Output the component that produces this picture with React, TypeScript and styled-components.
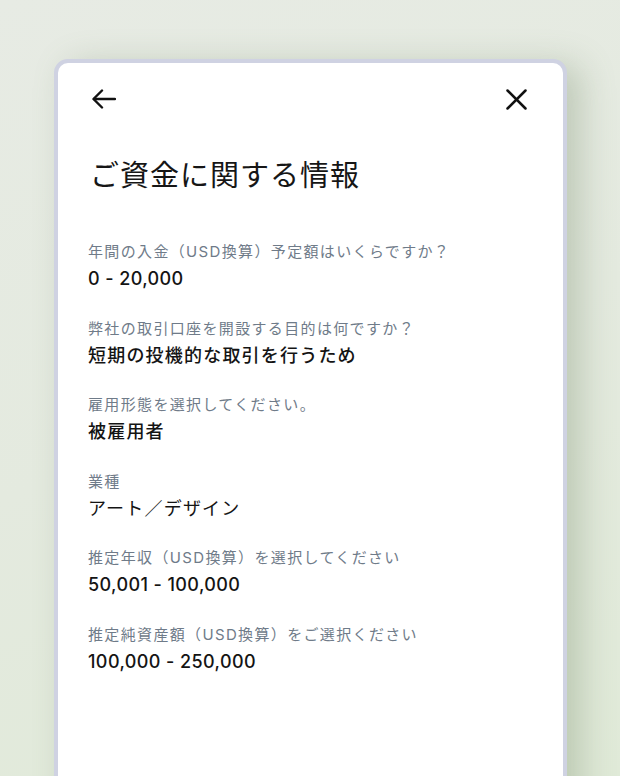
import React from 'react';
import styled, { createGlobalStyle } from 'styled-components';

const GlobalStyle = createGlobalStyle`
  html, body {
    margin: 0;
    padding: 0;
    height: 100%;
  }
  body {
    font-family: "Inter", "Noto Sans CJK JP", sans-serif;
    -webkit-font-smoothing: antialiased;
  }
`;

interface InfoItem {
  label: string;
  value: string;
  light?: boolean;
  numeric?: boolean;
}

const items: InfoItem[] = [
  { label: '年間の入金（USD換算）予定額はいくらですか？', value: '0 - 20,000', numeric: true },
  { label: '弊社の取引口座を開設する目的は何ですか？', value: '短期の投機的な取引を行うため' },
  { label: '雇用形態を選択してください。', value: '被雇用者' },
  { label: '業種', value: 'アート／デザイン', light: true },
  { label: '推定年収（USD換算）を選択してください', value: '50,001 - 100,000', numeric: true },
  { label: '推定純資産額（USD換算）をご選択ください', value: '100,000 - 250,000', numeric: true },
];

const Page = styled.div`
  height: 776px;
  overflow: hidden;
  background: linear-gradient(160deg, #e7ebe4 0%, #e4eadf 50%, #e0ead8 100%);
  padding: 59px 0 0 54px;
  box-sizing: border-box;
`;

const Card = styled.div`
  width: 513px;
  min-height: 760px;
  box-sizing: border-box;
  background: #ffffff;
  border: 4px solid #cfd2e2;
  border-radius: 14px;
  padding: 24px 36px 0 30px;
  box-shadow: 14px 6px 34px rgba(110, 130, 95, 0.32);
`;

const Header = styled.header`
  display: flex;
  justify-content: space-between;
  align-items: center;
  height: 24px;
  padding-left: 4px;

  button {
    background: transparent;
    border: none;
    padding: 0;
    display: flex;
    cursor: pointer;
  }
`;

const Title = styled.h1`
  margin: 45px 0 45px 2px;
  font-size: 29px;
  line-height: 40px;
  font-weight: 400;
  letter-spacing: 1px;
  color: #161616;
`;

const List = styled.dl`
  display: flex;
  flex-direction: column;
  gap: 25.5px;
  margin: 0;
`;

const Item = styled.div`
  display: flex;
  flex-direction: column;
  gap: 3px;
`;

const Label = styled.dt`
  font-size: 15px;
  line-height: 22px;
  letter-spacing: 1.35px;
  color: #6f7b89;
`;

const Value = styled.dd<{ $light?: boolean; $numeric?: boolean }>`
  margin: 0;
  font-size: 18px;
  line-height: 26px;
  letter-spacing: ${({ $numeric }) => ($numeric ? '0.4px' : '1.2px')};
  font-weight: ${({ $light }) => ($light ? 400 : 500)};
  color: #141414;
`;

const BackIcon = () => (
  <svg width="24" height="20" viewBox="0 0 24 20" fill="none" stroke="#111" strokeWidth="2.4" strokeLinecap="round" strokeLinejoin="round">
    <path d="M23 10H2" />
    <path d="M10 1.5 1.5 10 10 18.5" />
  </svg>
);

const CloseIcon = () => (
  <svg width="21" height="21" viewBox="0 0 21 21" fill="none" stroke="#111" strokeWidth="2.5" strokeLinecap="round">
    <path d="M1.5 1.5 19.5 19.5" />
    <path d="M19.5 1.5 1.5 19.5" />
  </svg>
);

export default function App() {
  return (
    <>
      <GlobalStyle />
      <Page>
        <Card>
          <Header>
            <button title="back"><BackIcon /></button>
            <button title="close"><CloseIcon /></button>
          </Header>
          <Title>ご資金に関する情報</Title>
          <List>
            {items.map((item) => (
              <Item key={item.label}>
                <Label>{item.label}</Label>
                <Value $light={item.light} $numeric={item.numeric}>{item.value}</Value>
              </Item>
            ))}
          </List>
        </Card>
      </Page>
    </>
  );
}
